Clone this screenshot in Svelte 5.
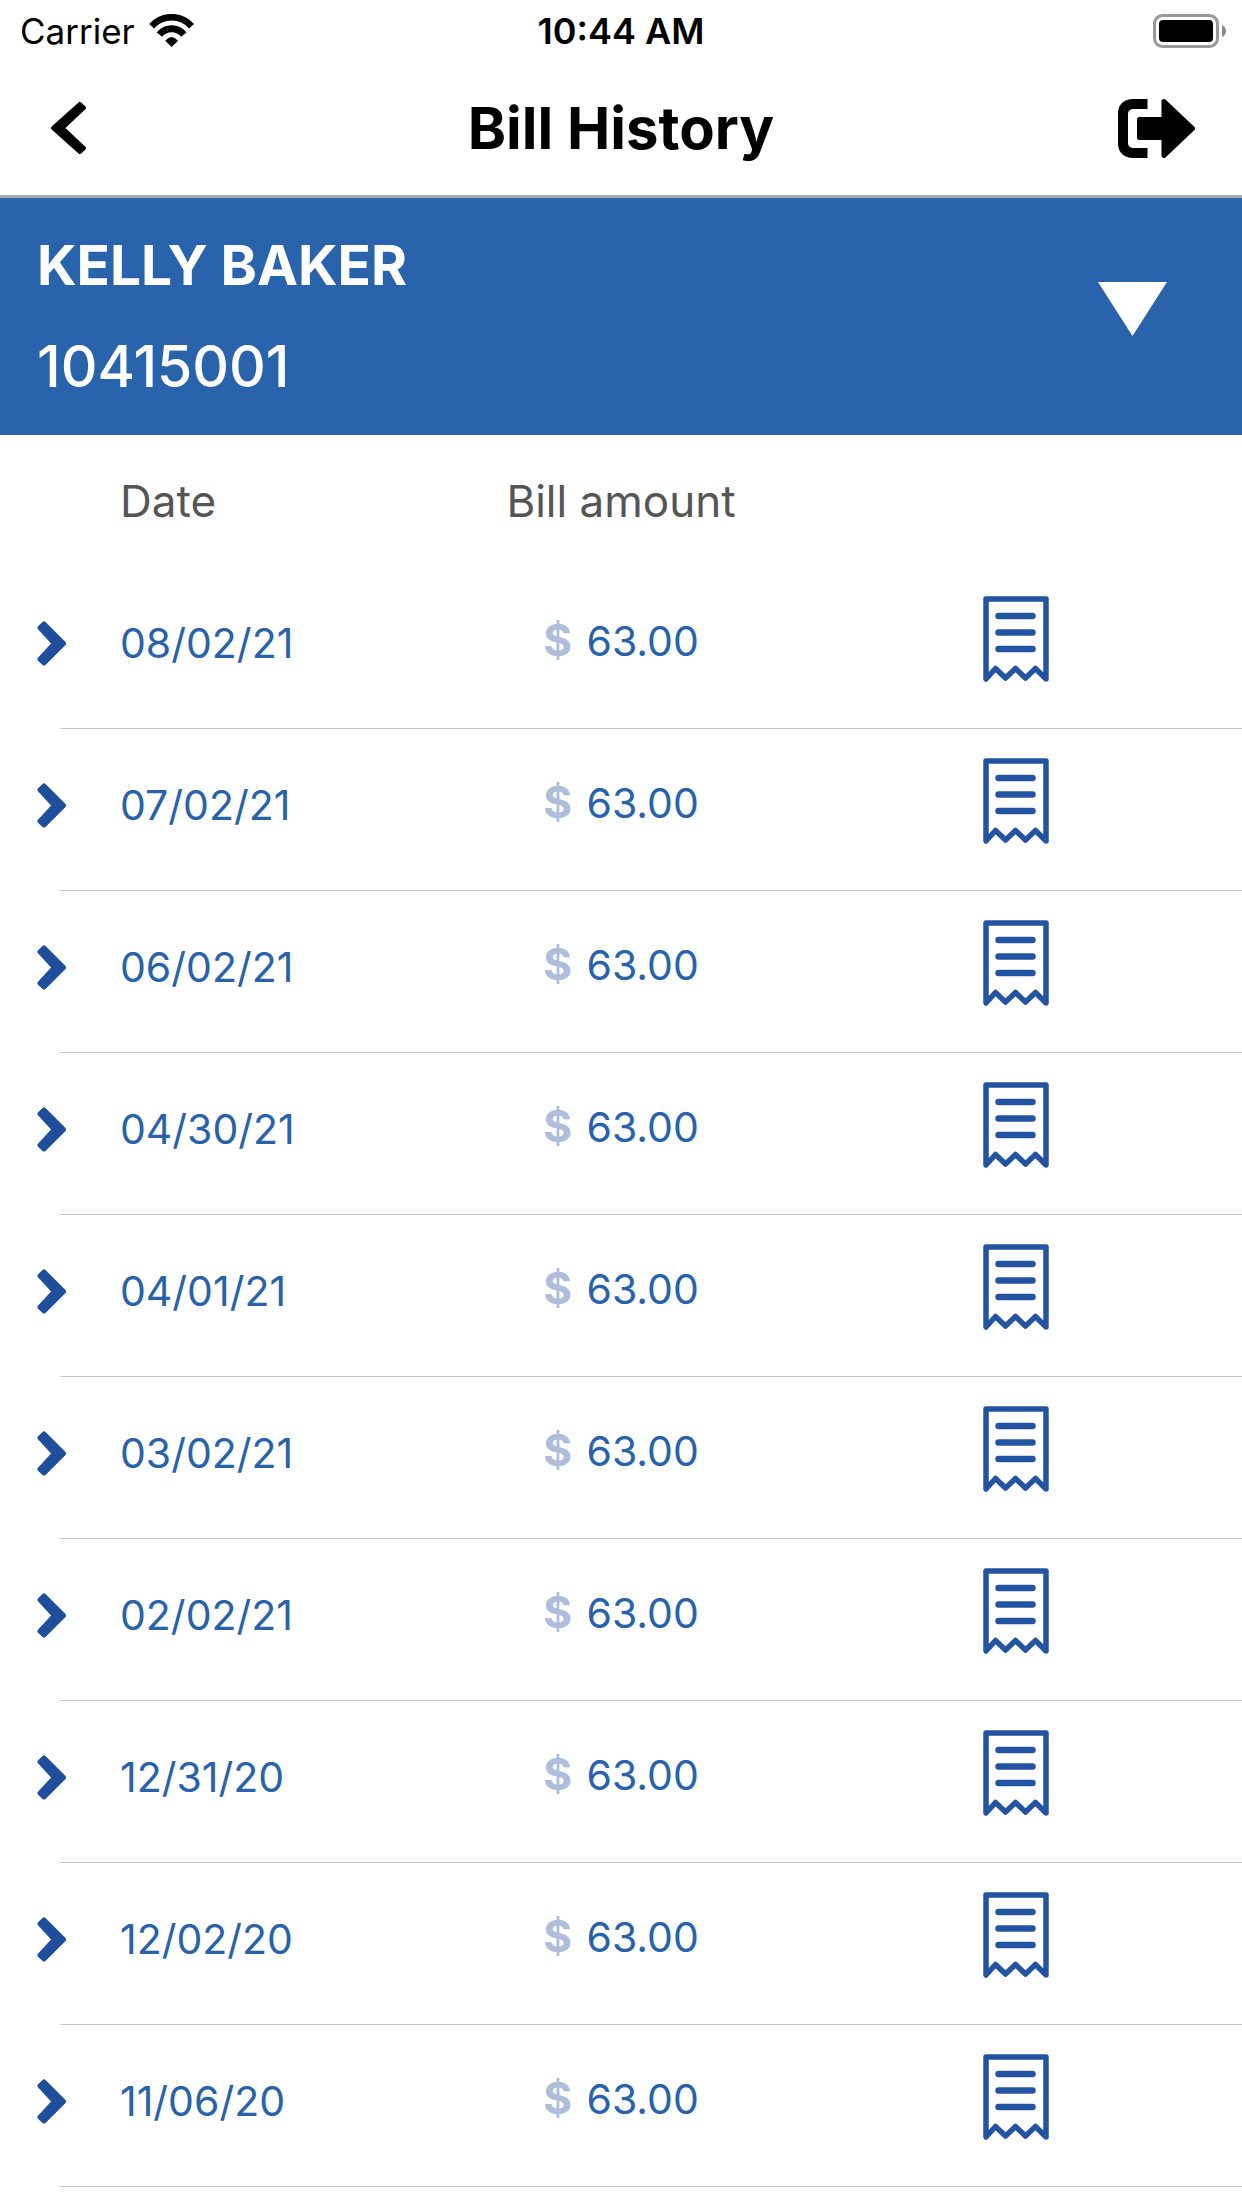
<script>
  const account = { name: "KELLY BAKER", number: "10415001" };

  const bills = [
    { date: "08/02/21", amount: "63.00" },
    { date: "07/02/21", amount: "63.00" },
    { date: "06/02/21", amount: "63.00" },
    { date: "04/30/21", amount: "63.00" },
    { date: "04/01/21", amount: "63.00" },
    { date: "03/02/21", amount: "63.00" },
    { date: "02/02/21", amount: "63.00" },
    { date: "12/31/20", amount: "63.00" },
    { date: "12/02/20", amount: "63.00" },
    { date: "11/06/20", amount: "63.00" },
  ];
</script>

<div class="status">
  <div class="carrier">
    <span>Carrier</span>
    <svg width="46" height="33" viewBox="0 0 46 33" aria-hidden="true">
      <g fill="none" stroke="#000">
        <path d="M2.7 12.2A26.5 26.5 0 0 1 42.5 12.2" stroke-width="6.6" />
        <path d="M10.4 20.6A15.7 15.7 0 0 1 34.8 20.6" stroke-width="7" />
      </g>
      <path d="M16.2 26.7Q22.6 19.4 29 26.7L22.6 33Z" />
    </svg>
  </div>
  <span class="time">10:44 AM</span>
  <svg class="end" width="73" height="34" viewBox="0 0 73 34" aria-hidden="true">
    <rect x="1.5" y="1.5" width="63" height="31" rx="8" fill="none" stroke="#999" stroke-width="3" />
    <rect x="6" y="6" width="54" height="22" rx="4" />
    <path d="M69 11Q73 13 73 17T69 23Z" fill="#8a8a8a" />
  </svg>
</div>

<header class="nav">
  <button class="back" aria-label="Back">
    <svg width="35" height="52" viewBox="0 0 35 52">
      <path
        d="M28.8 2L33 5.8 11.5 26 33 46.2 28.8 50 2 26Z"
        stroke="#000"
        stroke-width="4"
        stroke-linejoin="round"
      />
    </svg>
  </button>
  <h1>Bill History</h1>
  <button class="end" aria-label="Log out">
    <svg width="77" height="59" viewBox="0 0 77 59">
      <path d="M29.5 5H14.5Q5 6 5 15V44Q5 53 14.5 54H29.5" fill="none" stroke="#000" stroke-width="10" />
      <path
        d="M21.5 20.5H46V2.5L74.5 29.5 46 56.5V38.5H21.5Z"
        stroke="#000"
        stroke-width="5"
        stroke-linejoin="round"
      />
    </svg>
  </button>
</header>

<main>
  <button class="account" aria-label="Change account, {account.name} {account.number}">
    <span class="who">
      <strong>{account.name}</strong>
      <span>{account.number}</span>
    </span>
    <svg class="arrow" width="69" height="54" viewBox="0 0 69 54">
      <path d="M0 0H69L34.5 54Z" fill="#fff" />
    </svg>
  </button>

  <table>
    <thead>
      <tr>
        <th class="more"></th>
        <th class="date">Date</th>
        <th class="amount">Bill amount</th>
        <th class="receipt"></th>
      </tr>
    </thead>
    <tbody>
      {#each bills as bill}
        <tr>
          <td class="more">
            <button aria-label="Details for {bill.date}">
              <svg width="30" height="45" viewBox="0 0 30 45">
                <path
                  d="M7 3L26.5 22.5 7 42 3 38.2 17.5 22.5 3 6.8Z"
                  fill="#1f4e9c"
                  stroke="#1f4e9c"
                  stroke-width="5"
                  stroke-linejoin="round"
                />
              </svg>
            </button>
          </td>
          <td class="date">{bill.date}</td>
          <td class="amount"><b>$</b> {bill.amount}</td>
          <td class="receipt">
            <button aria-label="View bill {bill.date}">
              <svg width="66" height="87" viewBox="0 0 66 87">
                <g fill="none" stroke="#2454a1" stroke-linejoin="round">
                  <path
                    d="M3 3H63V83L52.5 72.5 42.5 82 32.5 72.5 22.5 82 12.5 72.5 3 83Z"
                    stroke-width="5.5"
                  />
                  <path d="M15.5 20H49.5M15.5 36.5H49.5M15.5 53H49.5" stroke-width="6.5" stroke-linecap="round" />
                </g>
              </svg>
            </button>
          </td>
        </tr>
      {/each}
    </tbody>
  </table>
</main>

<style>
  :global(body) {
    background: #fff;
    color: #000;
    font-family: Inter, "Liberation Sans", sans-serif;
  }

  button {
    display: block;
    padding: 0;
    border: 0;
    background: none;
    color: inherit;
    font: inherit;
    cursor: pointer;
  }

  svg {
    display: block;
  }

  .status,
  .nav {
    display: grid;
    grid-template-columns: 1fr auto 1fr;
    align-items: center;
  }

  .status {
    height: 61px;
    padding: 0 16px;
    font-size: 36px;
  }

  .carrier {
    display: flex;
    align-items: center;
    gap: 14px;
    padding-left: 4px;
    font-size: 35px;
  }

  .time {
    font-weight: 600;
  }

  .end {
    justify-self: end;
  }

  .nav {
    height: 134px;
    padding: 0 47px;
    border-bottom: 3px solid #a9a9a9;
  }

  .back {
    justify-self: start;
    padding-left: 4px;
  }

  h1 {
    margin: 0;
    font-size: 58px;
    font-weight: 700;
  }

  .account {
    display: flex;
    justify-content: space-between;
    align-items: center;
    width: 100%;
    padding: 16px 75px 17px 37px;
    background: #2963ac;
    color: #fff;
    font-size: 57px;
    line-height: 102px;
    text-align: left;
  }

  .who {
    display: flex;
    flex-direction: column;
    font-weight: 500;
  }

  .who strong {
    font-size: 55px;
    font-weight: 700;
  }

  .arrow {
    margin-bottom: 15px;
  }

  table {
    width: 100%;
    table-layout: fixed;
    border-collapse: collapse;
    color: #2762ab;
    font-size: 41px;
  }

  th {
    height: 132px;
    padding: 0;
    color: #555;
    font-size: 44px;
    font-weight: 400;
  }

  td {
    height: 162px;
    box-sizing: border-box;
    padding: 0 0 10px;
  }

  /* divider is inset from the left edge */
  tbody tr {
    background: linear-gradient(#c6c6c6, #c6c6c6) 60px 100% / 100% 1px no-repeat;
  }

  .more {
    width: 9.5%;
    padding-left: 37px;
    box-sizing: border-box;
  }

  .date {
    width: 22.5%;
    padding-left: 2px;
    box-sizing: border-box;
    text-align: left;
  }

  .amount {
    width: 36%;
    text-align: center;
  }

  td.amount {
    padding-bottom: 16px;
  }

  .amount b {
    margin-right: 3px;
    color: #adbdda;
    font-size: 44px;
    font-weight: 700;
  }

  .receipt {
    width: 32%;
    padding-right: 54px;
    box-sizing: border-box;
  }

  td.receipt {
    padding-bottom: 18px;
  }

  .receipt button {
    margin: 0 auto;
  }
</style>
